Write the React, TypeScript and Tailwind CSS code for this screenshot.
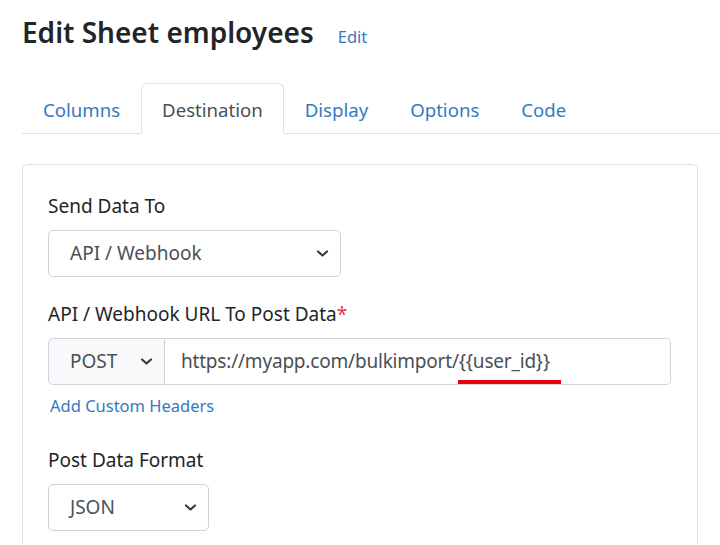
import React from 'react';

const font = { fontFamily: '"Noto Sans", "Open Sans", Arial, sans-serif' };

function Chevron() {
  return (
    <svg width="13" height="9" viewBox="0 0 13 9" className="shrink-0">
      <path d="M2 2.5 L6.5 6.5 L11 2.5" fill="none" stroke="#343a40" strokeWidth="2.2" strokeLinecap="round" strokeLinejoin="round" />
    </svg>
  );
}

function SelectBox({ value, width }: { value: string; width: string }) {
  return (
    <div className={`${width} h-[47px] flex items-center justify-between border border-[#ced4da] rounded-[5px] pl-[21px] pr-[11px] text-[19px] text-[#495057] bg-white`}>
      <span>{value}</span>
      <Chevron />
    </div>
  );
}

export default function App() {
  const tabs = ['Columns', 'Destination', 'Display', 'Options', 'Code'];

  return (
    <div className="w-[720px] h-[545px] overflow-hidden bg-white pl-[22px]" style={font}>
      {/* Title */}
      <div className="flex items-baseline gap-[24px] pt-[12px]">
        <h2 className="text-[28px] leading-[40px] font-semibold text-[#212529]">Edit Sheet employees</h2>
        <a className="text-[16.5px] text-[#3679c0]">Edit</a>
      </div>

      {/* Tabs */}
      <div className="mt-[31px] flex border-b border-[#dee2e6] w-[720px]">
        {tabs.map((tab) => (
          <div
            key={tab}
            className={`-mb-px px-[20px] pt-[12px] pb-[9px] text-[18.6px] leading-[28px] border rounded-t-[6px] ${
              tab === 'Destination'
                ? 'border-[#dee2e6] border-b-white bg-white text-[#495057]'
                : 'border-transparent text-[#3679c0]'
            }`}
          >
            {tab}
          </div>
        ))}
      </div>

      {/* Card */}
      <div className="mt-[30px] w-[676px] h-[420px] border border-[#dfe2e5] rounded-[6px] px-[25px] pt-[26px]">
        <label className="block text-[19px] leading-[30px] text-[#212529] mb-[9px]">Send Data To</label>
        <SelectBox value="API / Webhook" width="w-[293px]" />

        <label className="block mt-[22px] text-[19px] leading-[30px] text-[#212529] mb-[9px]">
          API / Webhook URL To Post Data<span className="text-[#dc3545]">*</span>
        </label>
        <div className="flex w-[623px] h-[47px]">
          <div className="w-[117px] flex items-center justify-between border border-[#ced4da] rounded-l-[5px] bg-[#f8f9fa] pl-[21px] pr-[11px] text-[19px] text-[#495057]">
            <span>POST</span>
            <Chevron />
          </div>
          <div className="relative flex-1 flex items-center border border-l-0 border-[#ced4da] rounded-r-[5px] pl-[16px] text-[19px] tracking-[-0.2px] text-[#495057]">
            <span>https://myapp.com/bulkimport/{'{{user_id}}'}</span>
            <div className="absolute left-[293px] top-[41px] w-[103px] h-[4px] bg-[#e8000b]" />
          </div>
        </div>
        <a className="block mt-[6px] ml-[2px] text-[16.5px] leading-[30px] text-[#3679c0]">Add Custom Headers</a>

        <label className="block mt-[24px] text-[19px] leading-[30px] text-[#212529] mb-[9px]">Post Data Format</label>
        <SelectBox value="JSON" width="w-[161px]" />
      </div>
    </div>
  );
}
